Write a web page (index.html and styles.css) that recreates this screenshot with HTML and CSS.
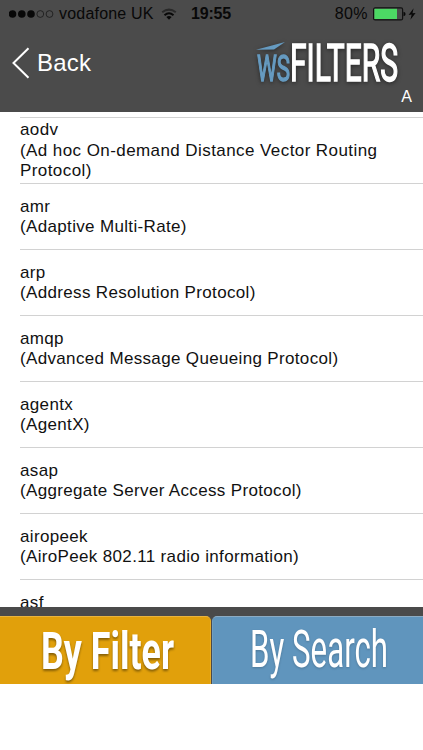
FILE: index.html
```html
<!DOCTYPE html>
<html lang="en">
  <head>
    <meta charset="UTF-8" />
    <meta name="viewport" content="width=device-width, initial-scale=1.0" />
    <title>WS Filters</title>
    <link rel="stylesheet" href="styles.css">
  </head>
  <body>
    <header>
      <div class="status-bar">
        <svg class="signal" width="46" height="12" viewBox="0 0 46 12">
          <circle cx="3.500" cy="6" r="3.8" />
          <circle cx="12.8" cy="6" r="3.8" />
          <circle cx="22" cy="6" r="3.8" />
          <circle class="empty" cx="31.3" cy="6" r="3.4" />
          <circle class="empty" cx="40.5" cy="6" r="3.4" />
        </svg>
        <span class="carrier">vodafone UK</span>
        <svg class="wifi" width="16" height="13" viewBox="0 0 16 13">
          <path class="faint" d="M1.2 4.2 Q8 -1 14.800 4.200" />
          <path d="M3.500 7.200 Q8 3.300 12.500 7.200" />
          <path class="dot" d="M5.400 9 Q8 7 10.600 9 L8 11.800 Z" />
        </svg>
        <span class="time">19:55</span>
        <span class="percent">80%</span>
        <svg class="battery" width="43" height="14" viewBox="0 0 43 14">
          <rect class="case" x="0.6" y="0.900" width="29" height="12" rx="1.500" />
          <rect class="charge" x="1.400" y="1.800" width="22.600" height="10.200" />
          <path d="M30.500 4.800 Q32.600 5 32.600 7 T30.500 9.200 Z" />
          <path d="M40.600 1.300 L35.600 7.900 L38.700 7.600 L37.400 12.700 L42.600 6 L39.500 6.300 Z" />
        </svg>
      </div>

      <div class="nav-bar">
        <a class="back" href="#">
          <svg width="18" height="32" viewBox="0 0 18 32">
            <path d="M16.500 1.200 L1.500 16 L16.500 30.800" />
          </svg>
          <span>Back</span>
        </a>
        <svg class="logo" width="150" height="46" viewBox="0 0 150 46">
          <path class="fin" d="M1 10.700 L30 3 L19 10.400 Z" />
          <text class="ws" x="2" y="41.500" textLength="33" lengthAdjust="spacingAndGlyphs">WS</text>
          <text class="filters" x="35" y="41.500" textLength="108" lengthAdjust="spacingAndGlyphs">FILTERS</text>
        </svg>
      </div>
      <div class="section-letter">A</div>
    </header>

    <main>
      <ul class="protocols">
        <li>aodv<br>(Ad hoc On-demand Distance Vector Routing Protocol)</li>
        <li>amr<br>(Adaptive Multi-Rate)</li>
        <li>arp<br>(Address Resolution Protocol)</li>
        <li>amqp<br>(Advanced Message Queueing Protocol)</li>
        <li>agentx<br>(AgentX)</li>
        <li>asap<br>(Aggregate Server Access Protocol)</li>
        <li>airopeek<br>(AiroPeek 802.11 radio information)</li>
        <li>asf</li>
      </ul>
    </main>

    <nav class="tabs">
      <a class="tab tab-filter" href="#">
        <svg width="211" height="67" viewBox="0 0 211 67">
          <text x="41" y="52" textLength="133" lengthAdjust="spacingAndGlyphs">By Filter</text>
        </svg>
      </a>
      <a class="tab tab-search" href="#">
        <svg width="211" height="67" viewBox="0 0 211 67">
          <text x="37" y="49.500" textLength="138" lengthAdjust="spacingAndGlyphs">By Search</text>
        </svg>
      </a>
    </nav>
  </body>
</html>
```

FILE: styles.css
```css
* {
  box-sizing: border-box;
}

body {
  font-family: "Liberation Sans", Arial, sans-serif;
  background-color: #fff;
  color: #111;
  margin: 0;
}

a {
  color: white;
  text-decoration: none;
}

svg {
  display: block;
  flex: none;
}

header {
  height: 112px;
  background-color: #4b4b4b;
}

.status-bar {
  display: flex;
  align-items: center;
  height: 28px;
  padding: 0 7px 0 9px;
  color: #080808;
  font-size: 16px;
}

.status-bar svg {
  fill: #080808;
}

.signal .empty {
  fill: none;
  stroke: #181818;
  stroke-width: 0.8;
}

.carrier {
  width: 95px;
  margin-left: 4px;
  letter-spacing: 0.2px;
  white-space: nowrap;
}

.wifi {
  margin-left: 7px;
}

.wifi path {
  fill: none;
  stroke: #080808;
  stroke-width: 2;
}

.wifi .faint {
  stroke: #292929;
}

.wifi .dot {
  fill: #080808;
  stroke: none;
}

.time {
  margin-left: 14px;
  font-weight: bold;
  letter-spacing: -0.2px;
}

.percent {
  margin-left: auto;
  margin-right: 5px;
  letter-spacing: 0.4px;
}

.battery .case {
  fill: none;
  stroke: #111;
  stroke-width: 1.2;
}

.battery .charge {
  fill: #4cd964;
}

.nav-bar {
  display: flex;
  justify-content: space-between;
  height: 60px;
  padding: 11px 18px 0 12px;
}

.back {
  display: flex;
  align-items: center;
  gap: 7px;
  height: 48px;
  font-size: 24px;
  letter-spacing: 0.2px;
}

.back path {
  fill: none;
  stroke: white;
  stroke-width: 2;
}

.logo {
  font-family: "Liberation Sans Narrow", "Roboto", sans-serif;
  filter: drop-shadow(0 1px 2px rgba(0, 0, 0, 0.5));
}

.logo .fin,
.logo .ws {
  fill: #669bc1;
}

.logo .ws {
  font-size: 37px;
  stroke: #669bc1;
  stroke-width: 1.4;
}

.logo .filters {
  font-size: 51px;
  fill: white;
  stroke: white;
  stroke-width: 1.6;
}

.section-letter {
  padding: 0 11px;
  color: white;
  font-size: 16px;
  line-height: 18px;
  text-align: right;
}

main {
  height: 495px;
  overflow: hidden;
}

.protocols {
  list-style: none;
  margin: 5px 0 0;
  padding: 0 0 0 20px;
}

.protocols li {
  display: flow-root;
  height: 66px;
  padding: 13px 30px 0 0;
  border-top: 1px solid #d2d2d2;
  font-size: 17px;
  line-height: 20.3px;
  letter-spacing: 0.34px;
}

.protocols li:first-child {
  padding-top: 2px;
  line-height: 20.5px;
  letter-spacing: 0.42px;
}

.tabs {
  display: flex;
  gap: 1px;
  height: 77px;
  padding-top: 9px;
  background-color: #4a4a4a;
}

.tab {
  flex: 1;
  overflow: hidden;
}

.tab-filter {
  background-color: #e1a00b;
  border-top: 1px solid #eab43e;
  border-right: 1px solid #e6ac29;
  border-top-right-radius: 5px;
}

.tab-search {
  background-color: #6095bd;
  border-top: 1px solid #8cabc2;
  border-left: 1px solid #749fbe;
  border-top-left-radius: 5px;
}

.tab text {
  font-family: "Liberation Sans Narrow", "Roboto", sans-serif;
  font-size: 51px;
  fill: white;
}

.tab-filter svg {
  filter: drop-shadow(0 2px 1px rgba(0, 0, 0, 0.4));
}

.tab-filter text {
  font-weight: bold;
}

.tab-search svg {
  filter: drop-shadow(0 1px 1px rgba(0, 0, 0, 0.2));
}
```
